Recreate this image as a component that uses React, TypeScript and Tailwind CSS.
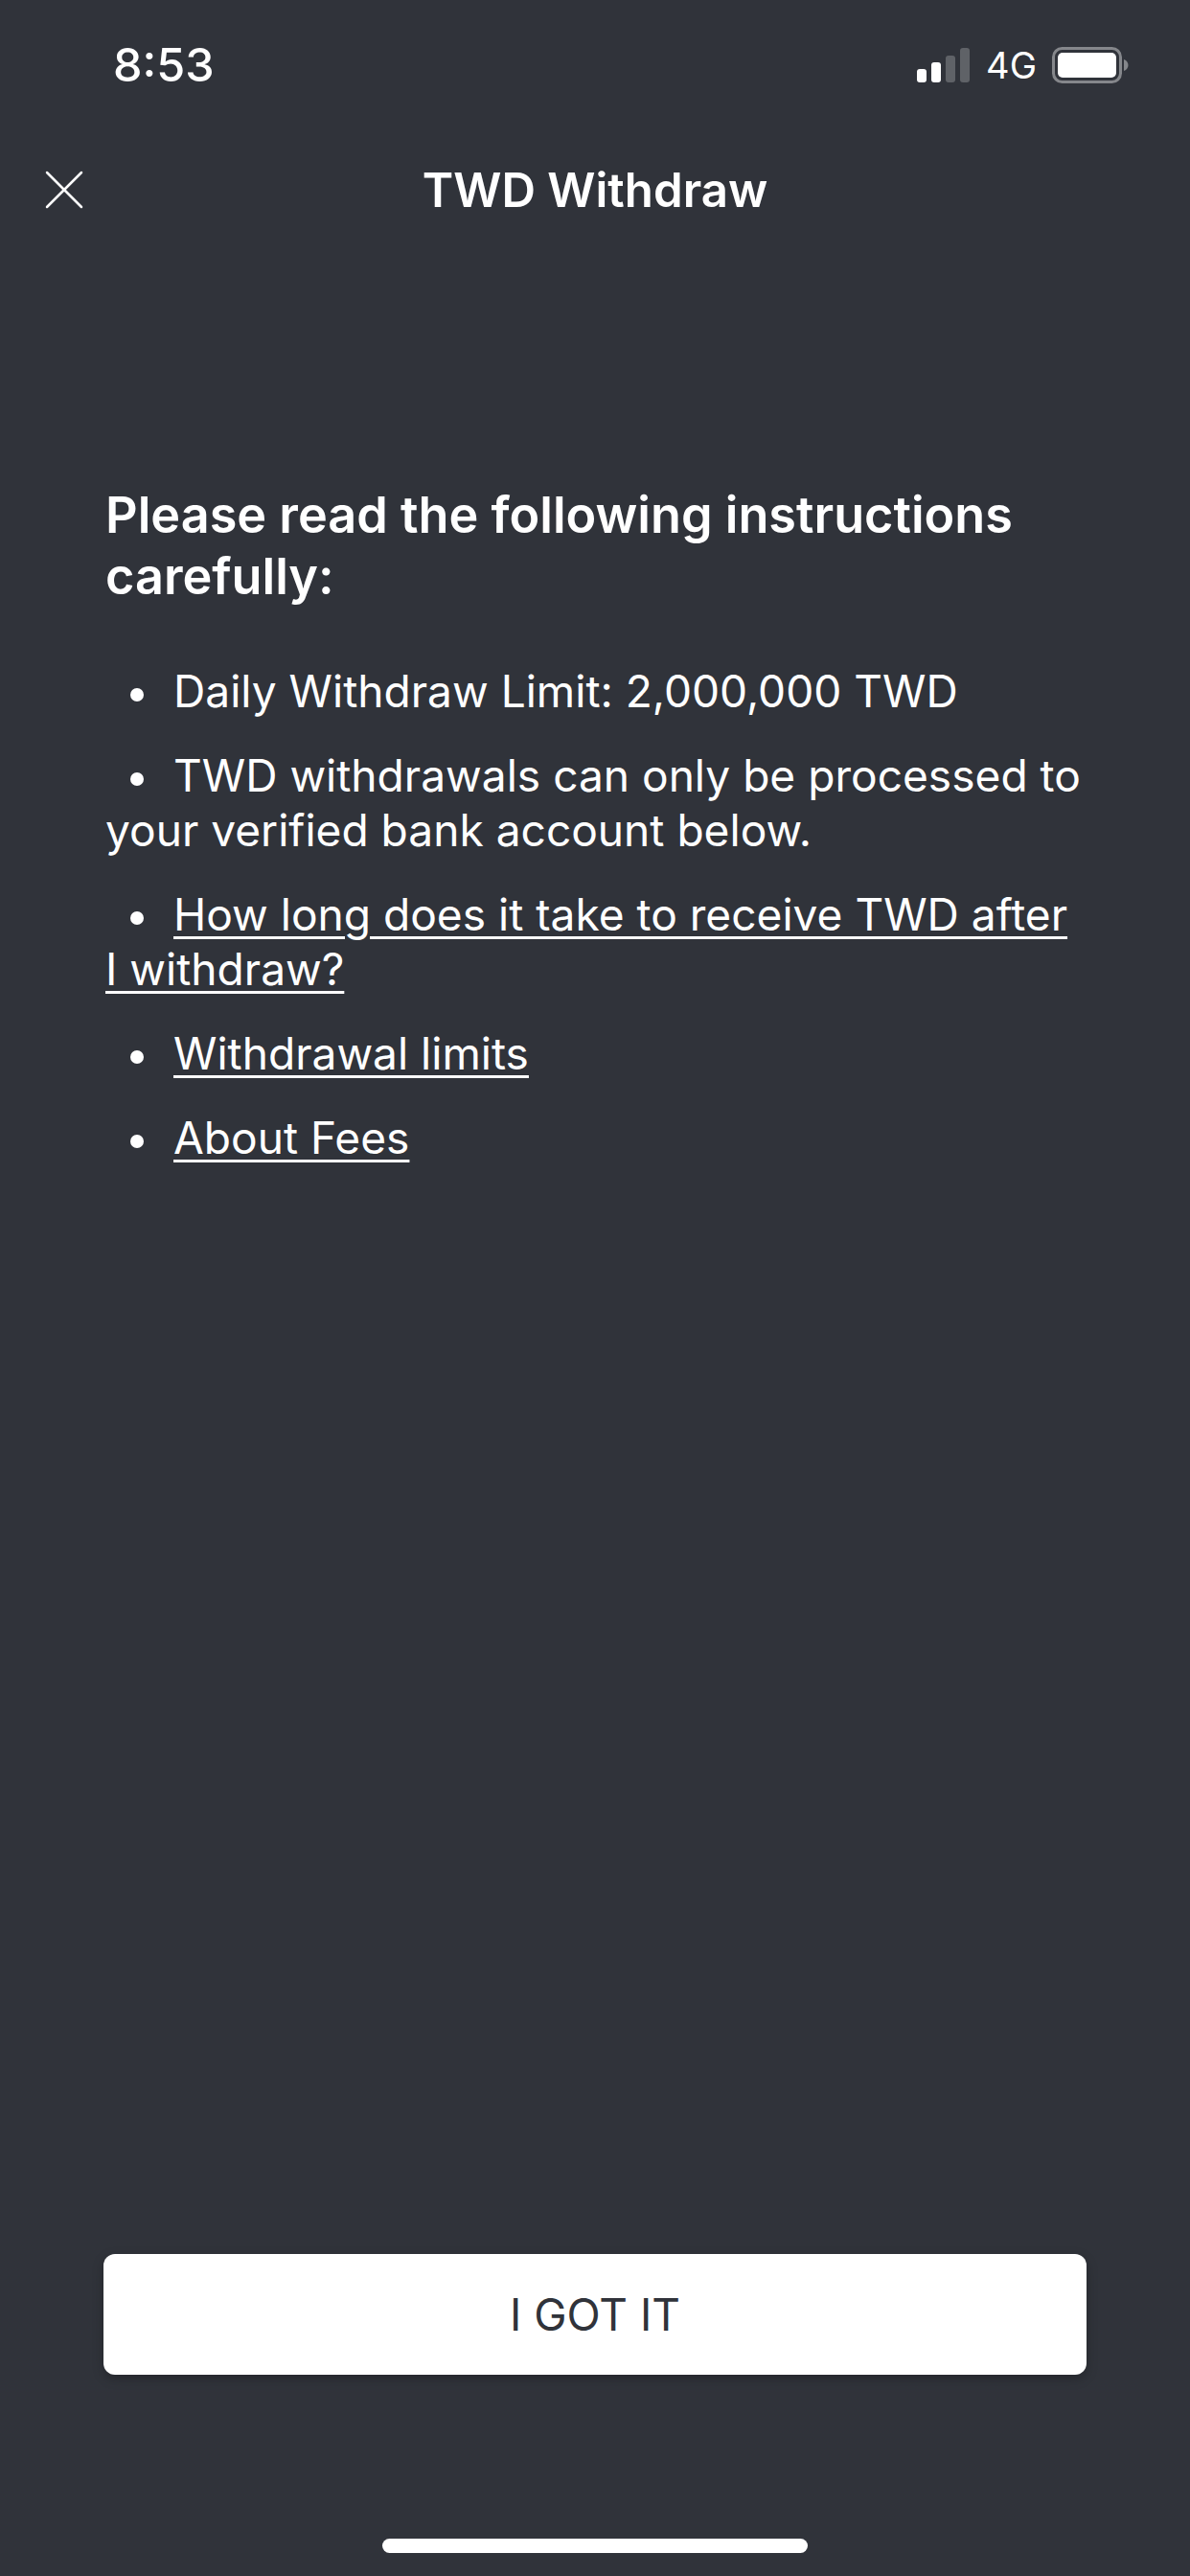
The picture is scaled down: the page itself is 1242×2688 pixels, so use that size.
import { X } from "lucide-react";

// Status bar cluster: signal bars, network label, battery
function StatusIcons() {
  return (
    <div className="flex items-center">
      <svg width="56" height="36" viewBox="0 0 56 36" className="mr-[16px] ml-[2px]">
        <rect x="0" y="22" width="10" height="14" rx="3" fill="#ffffff" />
        <rect x="15" y="15" width="10" height="21" rx="3" fill="#ffffff" />
        <rect x="30" y="8" width="10" height="28" rx="3" fill="#5f6267" />
        <rect x="45" y="0" width="10" height="36" rx="3" fill="#5f6267" />
      </svg>
      <span className="text-[38px] leading-[40px] text-white">4G</span>
      <svg width="80" height="38" viewBox="0 0 80 38" className="ml-[16px]">
        <rect x="1.500" y="1.500" width="70" height="35" rx="9" fill="none" stroke="#85878b" strokeWidth="3" />
        <rect x="6" y="6" width="61" height="26" rx="5" fill="#ffffff" />
        <path d="M75 13c3 1 4.500 3.500 4.500 6s-1.500 5-4.500 6z" fill="#85878b" />
      </svg>
    </div>
  );
}

function Bullet() {
  return <span className="inline-block w-[71px] pl-[26px] align-middle leading-none"><span className="block h-[14px] w-[14px] rounded-full bg-white" /></span>;
}

export default function App() {
  return (
    <div className="flex h-[2688px] w-[1242px] flex-col overflow-hidden bg-[#30333a] font-['Inter',sans-serif] text-white">
      {/* Status bar */}
      <div className="flex h-[135px] items-center justify-between pl-[118px] pr-[64px]">
        <span className="text-[48.500px] font-medium leading-[58px]">8:53</span>
        <StatusIcons />
      </div>

      {/* Header */}
      <div className="relative mt-[33px] flex h-[60px] items-center justify-center">
        <button className="absolute left-[31px] top-[-6px] text-white">
          <X size={72} strokeWidth={2.5} absoluteStrokeWidth />
        </button>
        <h1 className="text-[49.200px] font-semibold leading-[60px]">TWD Withdraw</h1>
      </div>

      {/* Instructions */}
      <div className="mt-[277px] flex-1 pl-[110px] pr-[107px]">
        <h2 className="text-[52.200px] font-semibold leading-[64px]">
          Please read the following instructions carefully:
        </h2>
        <ul className="mt-[60px] flex flex-col gap-[31px] text-[46.100px] leading-[57px]">
          <li>
            <Bullet />
            Daily Withdraw Limit: 2,000,000 TWD
          </li>
          <li>
            <Bullet />
            TWD withdrawals can only be processed to your verified bank account below.
          </li>
          <li>
            <Bullet />
            <a className="underline decoration-[3px] underline-offset-[6px]">How long does it take to receive TWD after I withdraw?</a>
          </li>
          <li>
            <Bullet />
            <a className="underline decoration-[3px] underline-offset-[6px]">Withdrawal limits</a>
          </li>
          <li>
            <Bullet />
            <a className="underline decoration-[3px] underline-offset-[6px]">About Fees</a>
          </li>
        </ul>
      </div>

      {/* Action */}
      <div className="px-[108px]">
        <button className="flex h-[126px] w-full items-center justify-center rounded-[12px] bg-white text-[46px] text-[#30333a] shadow-[0_4px_12px_rgba(0,0,0,0.25)]">
          I GOT IT
        </button>
      </div>

      {/* Home indicator */}
      <div className="mb-[24px] mt-[171px] flex justify-center">
        <div className="h-[15px] w-[444px] rounded-full bg-white" />
      </div>
    </div>
  );
}
